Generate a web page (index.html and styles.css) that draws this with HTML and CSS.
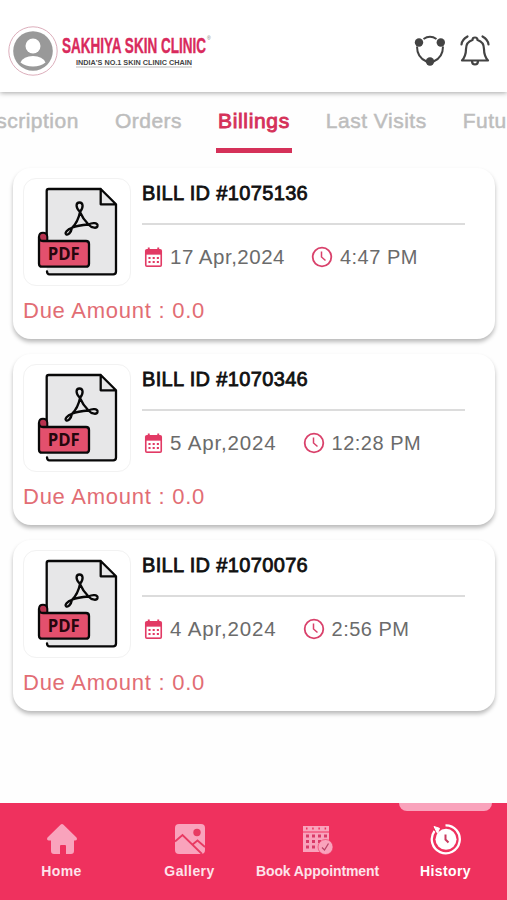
FILE: index.html
```html
<!DOCTYPE html>
<html lang="en">
<head>
    <meta charset="UTF-8">
    <meta name="viewport" content="width=device-width, initial-scale=1">
    <title>Sakhiya Skin Clinic</title>
    <link rel="stylesheet" href="styles.css">
</head>
<body>
    <!-- shared icons -->
    <svg class="sprite">
        <symbol id="pdf" viewBox="0 0 106 106">
            <path d="M22.700 60V12q0-2 2-2h52L92 25.300v67q0 3-3 3H26q-3.300 0-3.300-3z" fill="#e7e7e8"/>
            <path d="M22.700 56V12q0-2 2-2h52L92 25.300v67.200q0 2.800-2.800 2.800H25.500q-2.500 0-2.500-3M76.700 10v15.300H92" fill="none" stroke="#080808" stroke-width="2.300" stroke-linecap="round" stroke-linejoin="round"/>
            <path d="M15 62v-4q0-4.300 4-4.300t4.300 4V62z" fill="#b8324e" stroke="#080808" stroke-width="2"/>
            <path d="M15 58v26.700q0 3 3 3h44q3 0 3-3V65q0-3-3-3H19q-4 0-4-4z" fill="#e3506d" stroke="#080808" stroke-width="2.300" stroke-linejoin="round"/>
            <path d="M56 33C51 28 52 23.500 55.500 23.500S60 28 56 33C58 38 61 42 64.500 45.500 68 49.500 73 49.500 73.500 47 74 44 69 43 64.500 45.500 58 46 52 47 48 48.800 43 50.500 40.500 54 42 55.200 44 56.500 47 54 48 48.800 52 45 55 38 56 33z" fill="none" stroke="#080808" stroke-width="2.300" stroke-linejoin="round"/>
            <text x="23.700" y="81" textLength="32" lengthAdjust="spacingAndGlyphs" class="pdf-text">PDF</text>
        </symbol>
        <symbol id="calendar" viewBox="0 0 20 22">
            <path d="M1 4q0-2 2-2h14q2 0 2 2v15q0 2-2 2H3q-2 0-2-2z" fill="#e23a65"/>
            <path d="M5 .5v4M15 .5v4" stroke="#e23a65" stroke-width="2"/>
            <path d="M2.700 8h14.600v11.300H2.700z" fill="#fff"/>
            <path d="M4.700 11.500h11M4.700 15.800h11" stroke="#e23a65" stroke-width="2.200" stroke-dasharray="2.200 2.200"/>
        </symbol>
        <symbol id="clock" viewBox="0 0 22 22">
            <circle cx="11" cy="11" r="9.300" fill="none" stroke="#d9416b" stroke-width="1.800"/>
            <path d="M10.500 5.500V11l4 3.500" fill="none" stroke="#d9416b" stroke-width="1.500"/>
        </symbol>
    </svg>

    <header class="header">
        <svg class="avatar" viewBox="0 0 50 50">
            <circle cx="25" cy="25" r="24.200" fill="#fff" stroke="#dcaebb"/>
            <circle cx="25" cy="25" r="19.800" fill="#999"/>
            <circle cx="25" cy="20" r="7.500" fill="#fff"/>
            <path d="M12.500 36.500q3-6.500 12.500-6.500t12.500 6.500q-5 4-12.500 4t-12.500-4z" fill="#fff"/>
        </svg>
        <svg class="logo" viewBox="0 0 150 40">
            <text x="0" y="22" textLength="144" lengthAdjust="spacingAndGlyphs" class="logo-name">SAKHIYA SKIN CLINIC</text>
            <text x="145" y="9" class="logo-mark">®</text>
            <text x="14" y="33.500" textLength="116" lengthAdjust="spacingAndGlyphs" class="logo-tag">INDIA'S NO.1 SKIN CLINIC CHAIN</text>
            <path d="M14 36h116" stroke="#bbb"/>
        </svg>
        <div class="header-icons">
            <svg width="32" height="32" viewBox="0 0 32 32">
                <path d="M9.500 4Q16-.5 22.500 4M3 11.500q0 11 9.500 15M29 11.500q0 11-9.500 15" fill="none" stroke="#434343" stroke-width="2"/>
                <circle cx="5" cy="7.500" r="4.200" fill="#434343"/>
                <circle cx="26.800" cy="7.500" r="4.200" fill="#434343"/>
                <circle cx="16" cy="26.500" r="4.200" fill="#434343"/>
            </svg>
            <svg width="30" height="32" viewBox="0 0 30 32" fill="none" stroke="#434343" stroke-width="2.200" stroke-linecap="round" stroke-linejoin="round">
                <path d="M12.500 5q0-2.500 2.500-2.500T17.500 5q6.500 2 6.500 9 0 7 4 11.500H2Q6 21 6 14q0-7 6.500-9zM12 26q0 3.500 3 3.500t3-3.500"/>
                <path d="M1.500 9.500q.5-5 6-8M28.500 9.500q-.5-5-6-8"/>
            </svg>
        </div>
    </header>

    <nav class="tabs">
        <a class="tab">Prescription</a>
        <a class="tab">Orders</a>
        <a class="tab active">Billings</a>
        <a class="tab">Last Visits</a>
        <a class="tab">Future Visits</a>
    </nav>

    <main class="bills">
        <div class="bill">
            <div class="bill-top">
                <div class="thumb"><svg><use href="#pdf"/></svg></div>
                <div class="bill-info">
                    <h2>BILL ID #1075136</h2>
                    <div class="bill-meta">
                        <svg class="icon-cal"><use href="#calendar"/></svg>
                        <span class="date">17 Apr,2024</span>
                        <svg class="icon-clock"><use href="#clock"/></svg>
                        <span>4:47 PM</span>
                    </div>
                </div>
            </div>
            <p class="due">Due Amount : 0.0</p>
        </div>
        <div class="bill">
            <div class="bill-top">
                <div class="thumb"><svg><use href="#pdf"/></svg></div>
                <div class="bill-info">
                    <h2>BILL ID #1070346</h2>
                    <div class="bill-meta">
                        <svg class="icon-cal"><use href="#calendar"/></svg>
                        <span class="date short">5 Apr,2024</span>
                        <svg class="icon-clock"><use href="#clock"/></svg>
                        <span>12:28 PM</span>
                    </div>
                </div>
            </div>
            <p class="due">Due Amount : 0.0</p>
        </div>
        <div class="bill">
            <div class="bill-top">
                <div class="thumb"><svg><use href="#pdf"/></svg></div>
                <div class="bill-info">
                    <h2>BILL ID #1070076</h2>
                    <div class="bill-meta">
                        <svg class="icon-cal"><use href="#calendar"/></svg>
                        <span class="date short">4 Apr,2024</span>
                        <svg class="icon-clock"><use href="#clock"/></svg>
                        <span>2:56 PM</span>
                    </div>
                </div>
            </div>
            <p class="due">Due Amount : 0.0</p>
        </div>
    </main>

    <footer class="bottom-nav">
        <a class="nav-item">
            <svg viewBox="0 0 32 32" fill="#f9a3bc">
                <path d="M14.500 1.700q1.500-1.400 3 0l13 12.800q1.500 2.500-1.500 3h-1V28q0 3-3 3h-5v-8q0-1-1-1h-4q-1 0-1 1v8H8q-3 0-3-3V17.500H3q-3-.5-1.500-3z"/>
            </svg>
            <span>Home</span>
        </a>
        <a class="nav-item">
            <svg viewBox="0 0 32 32">
                <rect x="1" y="1" width="30" height="30" rx="4" fill="#f9a3bc"/>
                <circle cx="23" cy="9.500" r="3.700" fill="#e83a62"/>
                <path d="M1 18.500l7.500-6.500L28 31M18 22l5.500-4.500L31 24" fill="none" stroke="#e83a62" stroke-width="1.800"/>
            </svg>
            <span>Gallery</span>
        </a>
        <a class="nav-item">
            <svg viewBox="0 0 32 32">
                <path d="M1 3h26v26H1z" fill="#f9a3bc"/>
                <path d="M1 9h26" stroke="#ef315e" stroke-width="1"/>
                <path d="M4 5.500h22" stroke="#ef315e" stroke-width="2" stroke-dasharray="1.500 4.700"/>
                <path d="M4 13h21M4 18.500h21M4 24h9.500" stroke="#d93a68" stroke-width="3" stroke-dasharray="3 3"/>
                <circle cx="23.500" cy="24" r="7.500" fill="#f9a3bc" stroke="#ef315e" stroke-width=".6"/>
                <path d="M20 24.500l2.500 2.500 4-6.500" fill="none" stroke="#b84468" stroke-width="1.300"/>
            </svg>
            <span class="long">Book Appointment</span>
        </a>
        <a class="nav-item active">
            <svg viewBox="0 0 32 32">
                <path d="M15.500 2.300A14 14 0 1 1 4.500 8" fill="none" stroke="#fff" stroke-width="2.300"/>
                <path d="M4 3.500l5.500 1.800-2 5z" fill="#fff" stroke="#fff"/>
                <circle cx="16" cy="16.300" r="10.500" fill="#fff"/>
                <path d="M15.500 11.500v5l3 3" fill="none" stroke="#c93a60" stroke-width="2"/>
            </svg>
            <span>History</span>
        </a>
    </footer>
</body>
</html>
```
FILE: styles.css
```css
body {
    font-family: "Liberation Sans", Arial, sans-serif;
    margin: 0;
    height: 900px;
    display: flex;
    flex-direction: column;
    background-color: #fefefe;
    overflow: hidden;
}

.sprite {
    position: absolute;
    width: 0;
    height: 0;
}

.pdf-text {
    font: bold 17.7px "Open Sans", sans-serif;
    fill: #26060d;
}

/* header */
.header {
    display: flex;
    align-items: center;
    box-sizing: border-box;
    height: 92px;
    padding: 10px 17px 0 8px;
    background: #fff;
    box-shadow: 0 1px 5px rgba(0, 0, 0, 0.35);
    flex-shrink: 0;
}

.avatar {
    width: 50px;
    height: 50px;
}

.logo {
    width: 150px;
    height: 40px;
    margin-left: 4px;
    overflow: visible;
}

.logo-name {
    font-size: 22.5px;
    font-weight: bold;
    fill: #d92a5c;
    stroke: #d92a5c;
    stroke-width: 0.4px;
}

.logo-mark {
    font-size: 5px;
    fill: #777;
}

.logo-tag {
    font-size: 8px;
    font-weight: bold;
    fill: #444;
}

.header-icons {
    display: flex;
    gap: 14px;
    margin-left: auto;
}

/* tabs */
.tabs {
    display: flex;
    justify-content: flex-start;
    gap: 32px;
    height: 61px;
    margin-left: -40px;
    overflow: hidden;
    flex-shrink: 0;
}

.tab {
    box-sizing: border-box;
    flex-shrink: 0;
    padding: 17px 2px 0;
    font-size: 21px;
    line-height: 24px;
    letter-spacing: 0.5px;
    white-space: nowrap;
    color: #bdbdbd;
    -webkit-text-stroke: 0.5px #bdbdbd;
}

.tab.active {
    letter-spacing: 0.65px;
    color: #d53159;
    -webkit-text-stroke: 0.9px #d53159;
    border-bottom: 5px solid #d53159;
}

/* bill cards */
.bills {
    display: flex;
    flex-direction: column;
    gap: 15px;
    padding: 15px 12px 0 13px;
    flex-grow: 1;
}

.bill {
    box-sizing: border-box;
    height: 171px;
    padding: 10px;
    background: #fff;
    border-radius: 18px;
    box-shadow: 0 3px 4px rgba(0, 0, 0, 0.27);
}

.bill-top {
    display: flex;
    gap: 11px;
}

.thumb {
    box-sizing: border-box;
    width: 108px;
    height: 108px;
    border: 1px solid #f2f2f2;
    border-radius: 13px;
}

.thumb svg {
    display: block;
    width: 106px;
    height: 106px;
}

.bill-info {
    width: 323px;
}

.bill-info h2 {
    margin: 0;
    padding: 3px 0 18px;
    font-size: 20px;
    line-height: 24px;
    font-weight: normal;
    letter-spacing: 0.35px;
    color: #111;
    -webkit-text-stroke: 0.8px #111;
    border-bottom: 2px solid #dcdcdc;
}

.bill-meta {
    display: flex;
    align-items: center;
    margin-top: 20px;
    padding-left: 2px;
    font-size: 20px;
    line-height: 24px;
    letter-spacing: 0.5px;
    color: #6b6b6b;
}

.date {
    font-size: 20.5px;
    letter-spacing: 0.5px;
}

.date.short {
    letter-spacing: 0.85px;
}

.icon-cal {
    width: 19px;
    height: 21px;
    margin-right: 7px;
}

.icon-clock {
    width: 22px;
    height: 22px;
    margin: 0 7px 0 26px;
}

.due {
    margin: 13px 0 0;
    font-size: 22px;
    line-height: 24px;
    letter-spacing: 0.75px;
    color: #e26d74;
}

/* bottom navigation */
.bottom-nav {
    display: flex;
    height: 97px;
    margin: 0 -2.5px;
    background: #ef315e;
    flex-shrink: 0;
}

.nav-item {
    position: relative;
    flex: 1;
    display: flex;
    flex-direction: column;
    align-items: center;
    padding-top: 20px;
    font-size: 14px;
    font-weight: bold;
    line-height: 16px;
    letter-spacing: 0.4px;
    color: #fde3ea;
}

.nav-item svg {
    width: 32px;
    height: 32px;
    margin-bottom: 8px;
}

.nav-item .long {
    letter-spacing: -0.1px;
    white-space: nowrap;
}

.nav-item.active {
    color: #fff;
}

.nav-item.active::before {
    content: "";
    position: absolute;
    top: 0;
    width: 93px;
    height: 8px;
    background: #f9a3bc;
    border-radius: 0 0 8px 8px;
}
```
